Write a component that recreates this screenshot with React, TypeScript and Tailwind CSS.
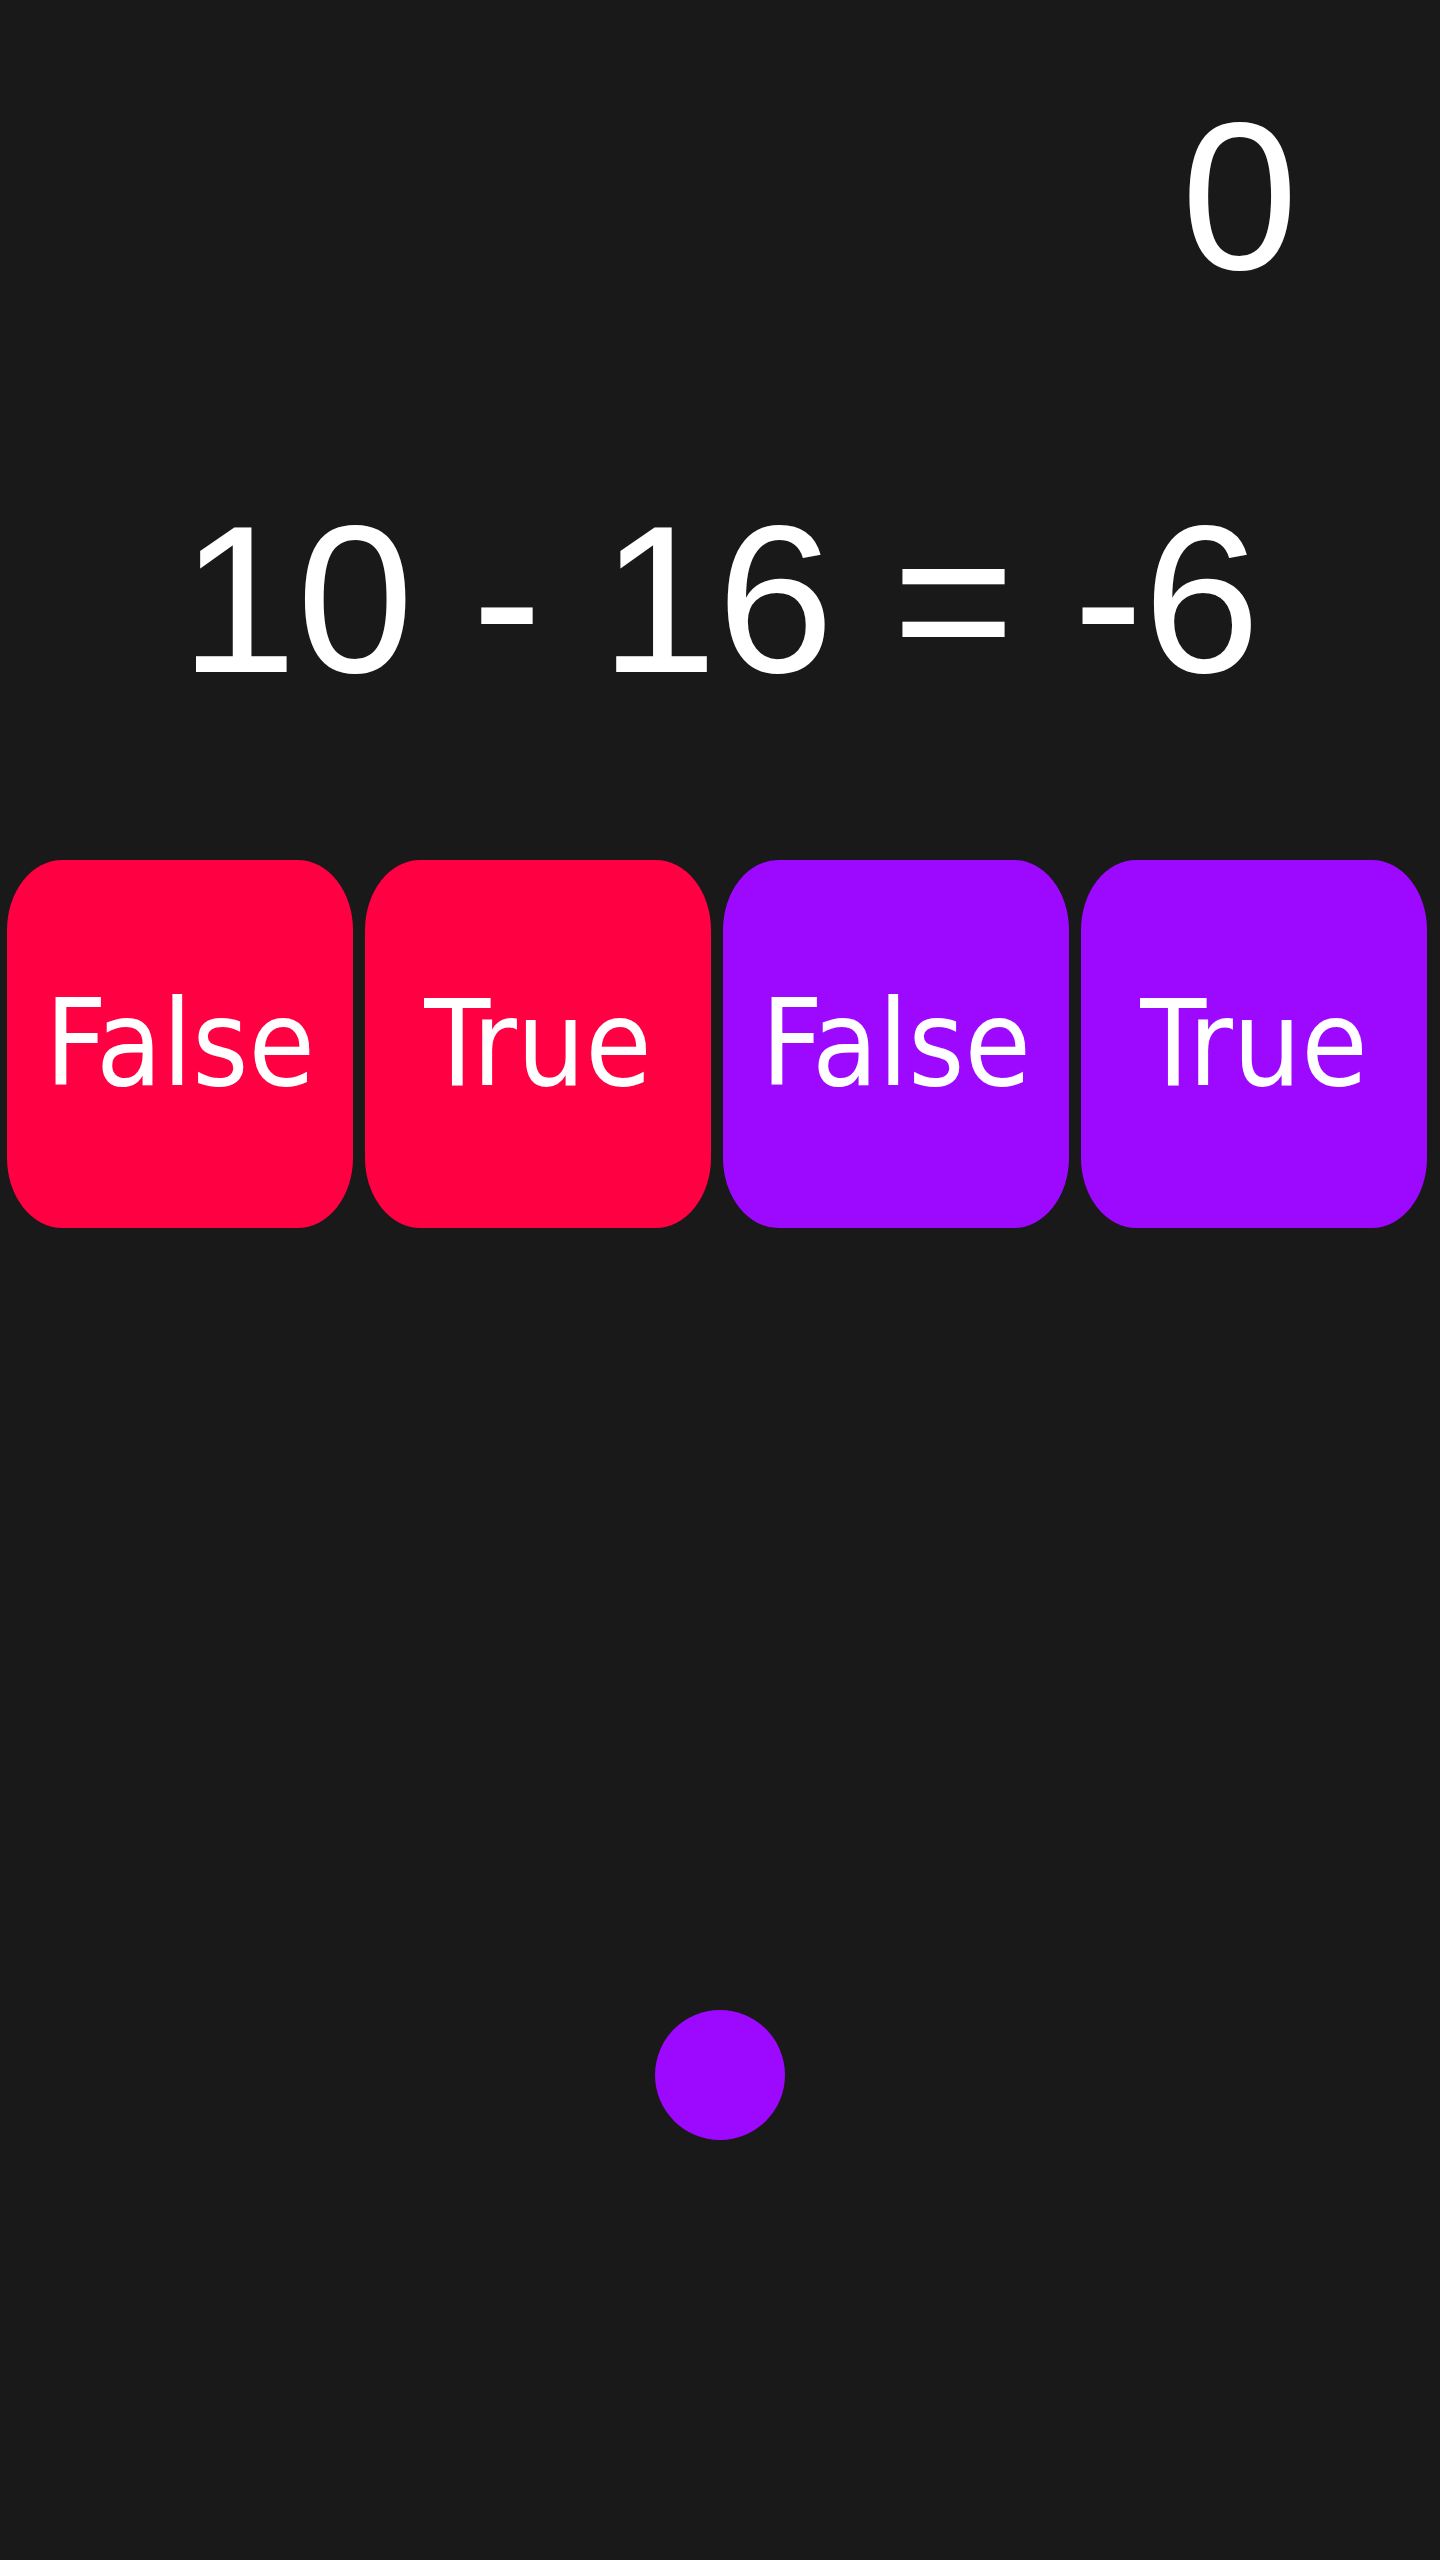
const CARDS = [
  { label: "False", color: "bg-[#ff0043]" },
  { label: "True", color: "bg-[#ff0043]" },
  { label: "False", color: "bg-[#9d08ff]" },
  { label: "True", color: "bg-[#9d08ff]" },
];

function AnswerCard({ label, color }: { label: string; color: string }) {
  return (
    <button
      className={`${color} w-[346px] h-[368px] rounded-[16%/19%] flex items-center justify-center text-white text-[120px] leading-none font-['Comic_Sans_MS','DejaVu_Sans_Condensed','DejaVu_Sans',sans-serif]`}
    >
      {label}
    </button>
  );
}

export default function App() {
  return (
    <div className="min-h-[2560px] bg-[#191919] flex flex-col font-['Liberation_Sans',Arial,sans-serif] text-white">
      {/* score */}
      <div className="flex justify-end pt-[92px] pr-[142px]">
        <span className="text-[210px] leading-none">0</span>
      </div>

      {/* equation */}
      <div className="mt-[193px] text-center text-[210px] leading-none whitespace-nowrap">
        10 - 16 = -6
      </div>

      {/* answers */}
      <div className="mt-[155px] flex gap-[12px] pl-[7px]">
        {CARDS.map((card, i) => (
          <AnswerCard key={i} label={card.label} color={card.color} />
        ))}
      </div>

      {/* ball */}
      <div className="mt-[782px] flex justify-center">
        <div className="w-[130px] h-[130px] rounded-full bg-[#9d08ff]" />
      </div>
    </div>
  );
}
